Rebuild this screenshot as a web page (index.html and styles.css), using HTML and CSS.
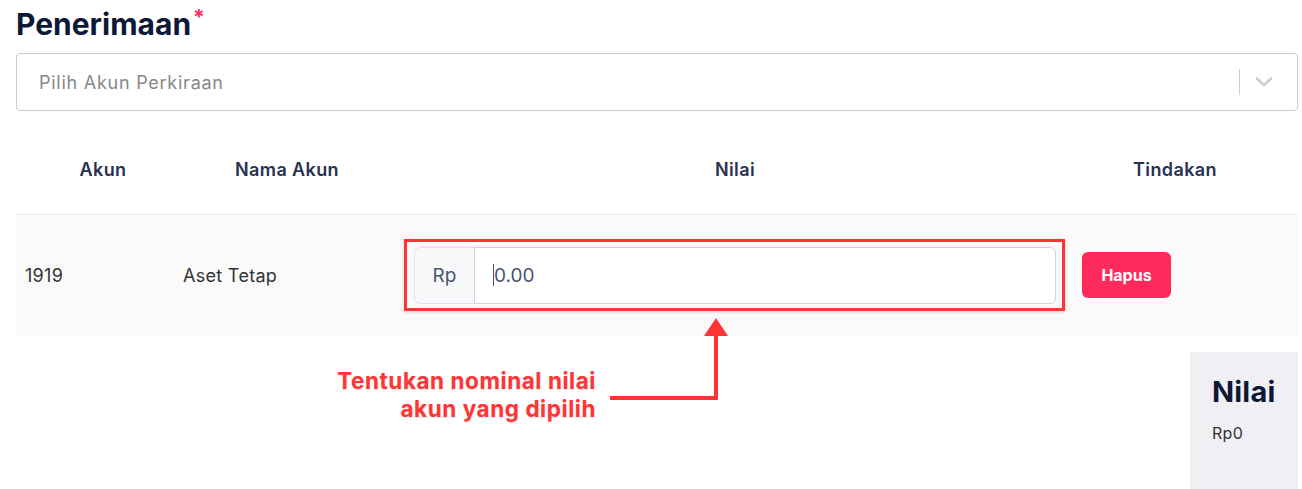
FILE: index.html
```html
<!DOCTYPE html>
<html>
<head>
<meta charset="utf-8">
<link rel="stylesheet" href="styles.css">
</head>
<body>
<div class="page">
  <h1 class="title">Penerimaan<span class="req">*</span></h1>
  <div class="select">
    <span class="placeholder">Pilih Akun Perkiraan</span>
    <div class="indicators">
      <span class="sep"></span>
      <svg class="chev" width="20" height="20" viewBox="0 0 20 20"><path d="M3 6.5 L10 13 L17 6.5" fill="none" stroke="#cccccc" stroke-width="2.6" stroke-linecap="round" stroke-linejoin="round"/></svg>
    </div>
  </div>
  <div class="table">
    <div class="thead">
      <div class="th h1">Akun</div>
      <div class="th h2">Nama Akun</div>
      <div class="th h3">Nilai</div>
      <div class="th h4">Tindakan</div>
    </div>
    <div class="trow">
      <div class="td c1">1919</div>
      <div class="td c2">Aset Tetap</div>
      <div class="td c3">
        <div class="igroup">
          <span class="addon">Rp</span>
          <div class="input"><span class="caret"></span>0.00</div>
          <div class="highlight"></div>
        </div>
      </div>
      <div class="td c4"><button class="btn-del">Hapus</button></div>
    </div>
  </div>
  <div class="summary-wrap">
    <div class="summary">
      <div class="sum-title">Nilai</div>
      <div class="sum-val">Rp0</div>
    </div>
  </div>
  <div class="note">Tentukan nominal nilai<br>akun yang dipilih</div>
  <svg class="arrow" width="140" height="100" viewBox="600 310 140 100">
    <path d="M610 398 L716 398 L716 333" fill="none" stroke="#ff3535" stroke-width="4"/>
    <polygon points="704,336 728,336 716,318" fill="#ff3535"/>
  </svg>
</div>
</body>
</html>
```

FILE: styles.css
```css
* { box-sizing: border-box; }
html, body { margin: 0; padding: 0; background: #ffffff; }
body { font-family: Inter, "Noto Sans", sans-serif; color: #333; }
.page { position: relative; width: 1302px; height: 489px; overflow: hidden; padding: 6px 4px 0 16px; }
.title { margin: 0; font-size: 30px; line-height: 36px; font-weight: 700; color: #0d1836; letter-spacing: 0; }
.req { color: #ff2d5c; font-size: 21px; font-weight: 700; vertical-align: top; position: relative; top: -6px; margin-left: 2px; }
.select { margin-top: 11px; height: 58px; border: 1px solid #cccccc; border-radius: 4px; display: flex; align-items: center; justify-content: space-between; padding-left: 22px; }
.placeholder { font-size: 18px; letter-spacing: 0.75px; color: #888888; }
.indicators { display: flex; align-items: center; height: 100%; }
.sep { width: 1px; height: 26px; background: #cccccc; }
.chev { margin: 0 23px 0 14px; }
.table { margin-top: 12px; }
.thead, .trow { display: grid; grid-template-columns: 158px 226px 660px 1fr; }
.thead { height: 92px; border-bottom: 1px solid #eeeeee; align-items: center; }
.th { text-align: center; font-size: 18px; letter-spacing: 0.4px; font-weight: 600; color: #283250; padding-top: 2px; }
.h1 { padding-left: 16px; }
.h3 { padding-left: 10px; }
.h4 { padding-right: 8px; }
.trow { height: 120px; background: #fafafa; align-items: center; }
.td { font-size: 18px; letter-spacing: 0.3px; color: #333; }
.c1 { padding-left: 9px; }
.c2 { padding-left: 9px; }
.c3 { padding-left: 14px; padding-right: 4px; }
.c4 { padding-left: 22px; }
.igroup { position: relative; display: flex; height: 57px; }
.addon { width: 60px; display: flex; align-items: center; justify-content: center; background: #f7f8fa; border: 1px solid #dfe2ea; border-right: none; border-radius: 6px 0 0 6px; font-size: 19px; letter-spacing: 0; color: #4a5570; }
.input { flex: 1; display: flex; align-items: center; background: #ffffff; border: 1px solid #cdd3e0; border-radius: 0 6px 6px 0; padding-left: 18px; font-size: 19px; letter-spacing: 0; color: #4a5570; }
.caret { display: inline-block; width: 1px; height: 22px; background: #4a5570; }
.highlight { position: absolute; left: -10px; right: -9px; top: -8px; bottom: -7px; border: 3px solid #ff3535; box-shadow: 0 1px 3px rgba(0,0,0,0.2); pointer-events: none; }
.btn-del { width: 89px; height: 46px; border: none; border-radius: 6px; background: #ff2a5c; color: #ffffff; font-family: Inter, sans-serif; font-size: 16px; font-weight: 700; }
.summary-wrap { display: flex; justify-content: flex-end; margin-top: 17px; }
.summary { width: 108px; height: 140px; background: #f0f0f4; padding: 22px 0 0 22px; }
.sum-title { font-size: 29px; line-height: 35px; font-weight: 700; color: #0d1836; letter-spacing: 0.2px; }
.sum-val { font-size: 16px; letter-spacing: 0.3px; color: #333; margin-top: 14px; }
.note { position: absolute; left: 280px; top: 367px; width: 316px; text-align: right; font-size: 22.5px; line-height: 28px; letter-spacing: 0.55px; font-weight: 700; color: #ff3535; text-shadow: 0 1px 2px rgba(0,0,0,0.15); }
.arrow { position: absolute; left: 600px; top: 310px; }
```
